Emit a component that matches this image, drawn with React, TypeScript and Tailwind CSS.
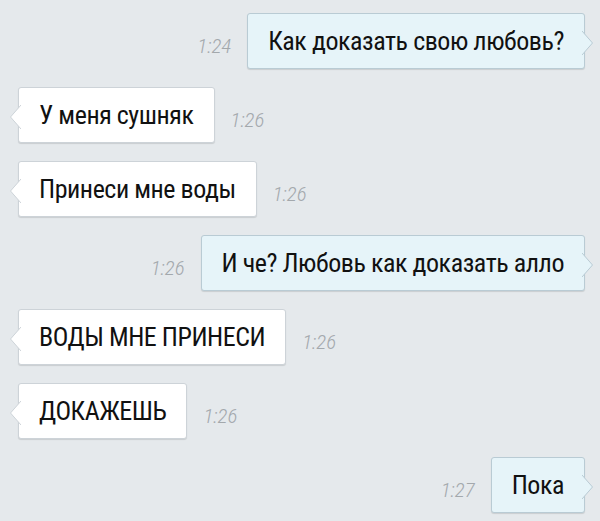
const messages = [
  {text: "Как доказать свою любовь?", time: "1:24", mine: true},
  {text: "У меня сушняк", time: "1:26", mine: false},
  {text: "Принеси мне воды", time: "1:26", mine: false},
  {text: "И че? Любовь как доказать алло", time: "1:26", mine: true},
  {text: "ВОДЫ МНЕ ПРИНЕСИ", time: "1:26", mine: false},
  {text: "ДОКАЖЕШЬ", time: "1:26", mine: false},
  {text: "Пока", time: "1:27", mine: true},
];

const Tail = ({mine}: {mine: boolean}) => (
  <svg
    width="12"
    height="24"
    viewBox="0 0 12 24"
    className={mine ? "absolute -right-[10px] top-[17px]" : "absolute -left-[10px] top-[17px]"}
  >
    {mine ? (
      <path d="M0 0 L10.5 12 L0 24" fill="#e6f4f9" stroke="#b9cbd4" strokeWidth="1"/>
    ) : (
      <path d="M12 0 L1.5 12 L12 24" fill="#ffffff" stroke="#cdd3d8" strokeWidth="1"/>
    )}
  </svg>
);

const Bubble = ({text, mine}: {text: string; mine: boolean}) => (
  <div
    className={
      mine
        ? "relative h-[56px] rounded-[3px] border border-[#b9cbd4] bg-[#e6f4f9] px-5 flex items-center shadow-[0_1px_1px_rgba(0,0,0,0.12)]"
        : "relative h-[56px] rounded-[3px] border border-[#cdd3d8] bg-white px-5 flex items-center shadow-[0_1px_1px_rgba(0,0,0,0.12)]"
    }
  >
    <Tail mine={mine}/>
    <span className="relative text-[26px] leading-none font-[440] text-[#111] font-['Roboto_Condensed','Roboto',sans-serif] [font-stretch:condensed] tracking-[-0.45px] whitespace-nowrap">
      {text}
    </span>
  </div>
);

const Time = ({time}: {time: string}) => (
  <span className="mt-[10px] text-[21px] leading-none italic font-light text-[#a3a8ac] font-['Roboto_Condensed','Roboto',sans-serif] [font-stretch:condensed]">
    {time}
  </span>
);

export default function App() {
  return (
    <div className="w-[600px] h-[521px] overflow-hidden bg-[#e5e9ec] pt-[13px] flex flex-col gap-[18px]">
      {messages.map((m, i) => (
        <div
          key={i}
          className={m.mine ? "flex items-center justify-end gap-4 pr-[15px]" : "flex items-center gap-4 pl-[18px]"}
        >
          {m.mine && <Time time={m.time}/>}
          <Bubble text={m.text} mine={m.mine}/>
          {!m.mine && <Time time={m.time}/>}
        </div>
      ))}
    </div>
  );
}
